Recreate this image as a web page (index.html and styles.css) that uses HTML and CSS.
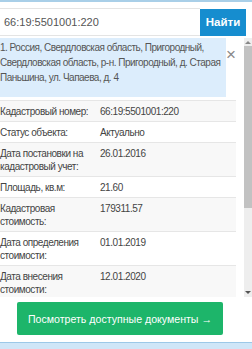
FILE: index.html
```html
<!DOCTYPE html>
<html lang="ru">
<head>
<meta charset="utf-8">
<link rel="stylesheet" href="styles.css">
</head>
<body>
<div class="page">
  <div class="topline"></div>
  <div class="search">
    <div class="input">66:19:5501001:220</div>
    <button class="btn-find">Найти</button>
  </div>
  <div class="main">
    <div class="content">
      <div class="suggest">
        <div class="suggest-text">1. Россия, Свердловская область, Пригородный, Свердловская область, р-н. Пригородный, д. Старая Паньшина, ул. Чапаева, д. 4</div>
        <div class="close">×</div>
      </div>
      <div class="table">
        <div class="row alt"><div class="k">Кадастровый номер:</div><div class="v">66:19:5501001:220</div></div>
        <div class="row"><div class="k">Статус объекта:</div><div class="v">Актуально</div></div>
        <div class="row alt"><div class="k">Дата постановки на кадастровый учет:</div><div class="v">26.01.2016</div></div>
        <div class="row"><div class="k">Площадь, кв.м:</div><div class="v">21.60</div></div>
        <div class="row alt"><div class="k">Кадастровая стоимость:</div><div class="v">179311.57</div></div>
        <div class="row"><div class="k">Дата определения стоимости:</div><div class="v">01.01.2019</div></div>
        <div class="row alt"><div class="k">Дата внесения стоимости:</div><div class="v">12.01.2020</div></div>
      </div>
    </div>
    <div class="scrollbar">
      <div class="arrow up"></div>
      <div class="thumb"></div>
      <div class="arrow down"></div>
    </div>
  </div>
  <div class="cta-wrap">
    <button class="cta">Посмотреть доступные документы →</button>
  </div>
  <div class="bottomline"></div>
</div>
</body>
</html>
```
FILE: styles.css
```css
* { box-sizing: border-box; }
html, body { margin: 0; padding: 0; background: #fff; }
body { font-family: "Liberation Sans", Arial, sans-serif; font-size: 10px; letter-spacing: -0.45px; color: #444; }
.page { width: 252px; height: 349px; display: flex; flex-direction: column; overflow: hidden; }
.topline { height: 2px; background: #a9cfe8; }
.search { display: flex; align-items: center; height: 35px; padding: 5px 6px 0 0; }
.input { flex: 1; height: 28px; border-top: 1px solid #e4e4e4; border-bottom: 1px solid #e4e4e4; display: flex; align-items: center; padding-left: 4px; font-size: 11px; letter-spacing: 0; color: #555; }
.btn-find { width: 46px; height: 27px; border: 0; background: #168dcf; color: #fff; font-family: inherit; font-weight: bold; font-size: 11.5px; letter-spacing: 0; padding: 0; }
.main { display: flex; height: 259px; margin-top: 1px; overflow: hidden; }
.content { flex: 1; display: flex; flex-direction: column; overflow: hidden; }
.suggest { display: flex; background: #fff; flex-shrink: 0; }
.suggest-text { width: 228px; background: #dcedfc; padding: 2px 4px 12px 0; line-height: 15px; color: #555; letter-spacing: -0.5px; }
.close { flex: 1; text-align: center; font-size: 17px; letter-spacing: 0; color: #888; line-height: 18px; padding-top: 8px; }
.table { width: 236px; margin-top: 3px; }
.row { display: flex; border-top: 1px solid #e6e6e6; padding: 4px 0 3px; line-height: 13px; }
.row.alt { background: #f8f8f8; }
.k { width: 100px; padding-right: 1px; }
.v { flex: 1; }
.scrollbar { width: 8px; margin-left: 8px; background: #eeeeee; display: flex; flex-direction: column; }
.thumb { height: 162px; background: #c2c2c2; margin-top: 0; }
.arrow { height: 8px; position: relative; }
.arrow.up::after { content: ""; position: absolute; left: 1px; top: 3px; border-left: 3px solid transparent; border-right: 3px solid transparent; border-bottom: 3px solid #888; }
.arrow.down { margin-top: auto; }
.arrow.down::after { content: ""; position: absolute; left: 1px; top: 2px; border-left: 3px solid transparent; border-right: 3px solid transparent; border-top: 3px solid #555; }
.cta-wrap { display: flex; padding: 5px 0 0 17px; }
.cta { width: 206px; height: 33px; border: 0; background: #1db56a; color: #fff; font-family: inherit; font-size: 10.6px; letter-spacing: 0; border-radius: 2px; padding: 0; }
.bottomline { margin-top: auto; height: 7px; background: #cfe6f8; border-top: 1px solid #9cc8e8; }
```
